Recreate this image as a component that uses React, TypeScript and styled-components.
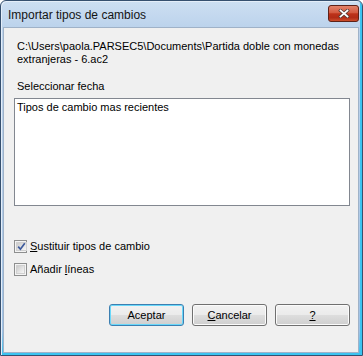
import * as React from "react";
import styled, { createGlobalStyle } from "styled-components";

const GlobalStyle = createGlobalStyle`
  html, body {
    margin: 0;
    padding: 0;
    background: #ffffff;
  }
  * {
    box-sizing: border-box;
  }
`;

const Window = styled.div`
  width: 363px;
  height: 356px;
  display: flex;
  flex-direction: column;
  padding: 0 3px 2px 2px;
  border: 1px solid #36506f;
  border-radius: 6px 6px 0 0;
  background: linear-gradient(
    to bottom,
    #cddff2 0px,
    #bcd3ec 26px,
    #b3cce8 200px,
    #9fc3e8 330px,
    #3fc2ef 352px
  );
  box-shadow: inset 1px 1px 0 #e4eef9, inset -2px -2px 0 #3bc4f1;
  font-family: "Liberation Sans", Arial, sans-serif;
  font-size: 11px;
  color: #000;
`;

const TitleBar = styled.div`
  height: 26px;
  display: flex;
  align-items: flex-start;
  justify-content: space-between;
  padding-left: 5px;
`;

const TitleText = styled.span`
  font-family: "Liberation Sans", Arial, sans-serif;
  font-size: 12px;
  line-height: 16px;
  margin-top: 6px;
  color: #141414;
`;

const CloseButton = styled.div`
  flex: 0 0 31px;
  width: 31px;
  height: 17px;
  margin-top: 4px;
  border: 1px solid #5e2218;
  border-radius: 3px;
  background-color: #c8452d;
  background-image: linear-gradient(#e3836b 0%, #d35a40 45%, #bd3219 52%, #b22c16 78%, #cc4f2c 100%);
  display: flex;
  align-items: center;
  justify-content: center;
`;

const Client = styled.div`
  flex: 1;
  display: flex;
  flex-direction: column;
  background: #f0f0f0;
  border: 1px solid #9fb2c8;
  padding: 12px 8px 0 10px;
`;

const TextBlock = styled.div<{ $top: number }>`
  margin-top: ${(p) => p.$top}px;
  padding-left: 3px;
  line-height: 13px;
`;

const ListBox = styled.div`
  margin-top: 5px;
  height: 108px;
  background: #ffffff;
  border: 1px solid #828790;
  padding: 2px 2px;
  line-height: 13px;
`;

const CheckRow = styled.label<{ $top: number }>`
  margin-top: ${(p) => p.$top}px;
  height: 15px;
  display: flex;
  align-items: center;
  gap: 3px;
  line-height: 13px;
`;

const Box = styled.span`
  width: 13px;
  height: 13px;
  border: 1px solid #8e8f8f;
  background: #f4f4f4;
  padding: 1px;
  display: flex;
`;

const BoxInner = styled.span`
  flex: 1;
  border: 1px solid #d0d0d0;
  background: linear-gradient(135deg, #cbcbcb 0%, #e6e6e6 60%, #f6f6f6 100%);
  display: flex;
  align-items: center;
  justify-content: center;
`;

const Buttons = styled.div`
  margin-top: 27px;
  display: flex;
  justify-content: flex-end;
  gap: 8px;
`;

const Button = styled.div<{ $default?: boolean }>`
  width: 75px;
  height: 22px;
  border: 1px solid ${(p) => (p.$default ? "#3c7fb1" : "#707070")};
  border-radius: 3px;
  background: linear-gradient(
    to bottom,
    #f2f2f2 0%,
    #ebebeb 48%,
    #dddddd 52%,
    #cfcfcf 100%
  );
  box-shadow: inset 0 0 0 1px ${(p) => (p.$default ? "#6ad8fa" : "#fbfbfb")};
  display: flex;
  align-items: center;
  justify-content: center;
  line-height: 13px;
`;

const U = styled.span`
  text-decoration: underline;
  text-underline-offset: 1px;
`;

function CloseGlyph() {
  return (
    <svg width="12" height="9" viewBox="0 0 12 9">
      <path d="M2.5 1.5 L9.5 7.5 M9.5 1.5 L2.5 7.5" stroke="#4f3a36" strokeWidth="3.2" strokeLinecap="square" />
      <path d="M2.5 1.5 L9.5 7.5 M9.5 1.5 L2.5 7.5" stroke="#ffffff" strokeWidth="1.7" strokeLinecap="square" />
    </svg>
  );
}

function Check() {
  return (
    <svg width="9" height="9" viewBox="0 0 9 9">
      <path d="M1.2 4.6 L3.4 7.2 L7.8 1.2" stroke="#3d5a9c" strokeWidth="1.7" fill="none" />
    </svg>
  );
}

function CheckBox(props: { checked?: boolean; children: React.ReactNode; top: number }) {
  return (
    <CheckRow $top={props.top}>
      <Box>
        <BoxInner>{props.checked ? <Check /> : null}</BoxInner>
      </Box>
      <span>{props.children}</span>
    </CheckRow>
  );
}

export default function App() {
  return (
    <>
      <GlobalStyle />
      <Window>
        <TitleBar>
          <TitleText>Importar tipos de cambios</TitleText>
          <CloseButton>
            <CloseGlyph />
          </CloseButton>
        </TitleBar>
        <Client>
          <TextBlock $top={0}>
            C:\Users\paola.PARSEC5\Documents\Partida doble con monedas
            <br />
            extranjeras - 6.ac2
          </TextBlock>
          <TextBlock $top={14}>Seleccionar fecha</TextBlock>
          <ListBox>Tipos de cambio mas recientes</ListBox>
          <CheckBox checked top={33}>
            <U>S</U>ustituir tipos de cambio
          </CheckBox>
          <CheckBox top={8}>
            Añadir <U>l</U>íneas
          </CheckBox>
          <Buttons>
            <Button $default>Aceptar</Button>
            <Button>
              <U>C</U>ancelar
            </Button>
            <Button>
              <U>?</U>
            </Button>
          </Buttons>
        </Client>
      </Window>
    </>
  );
}
